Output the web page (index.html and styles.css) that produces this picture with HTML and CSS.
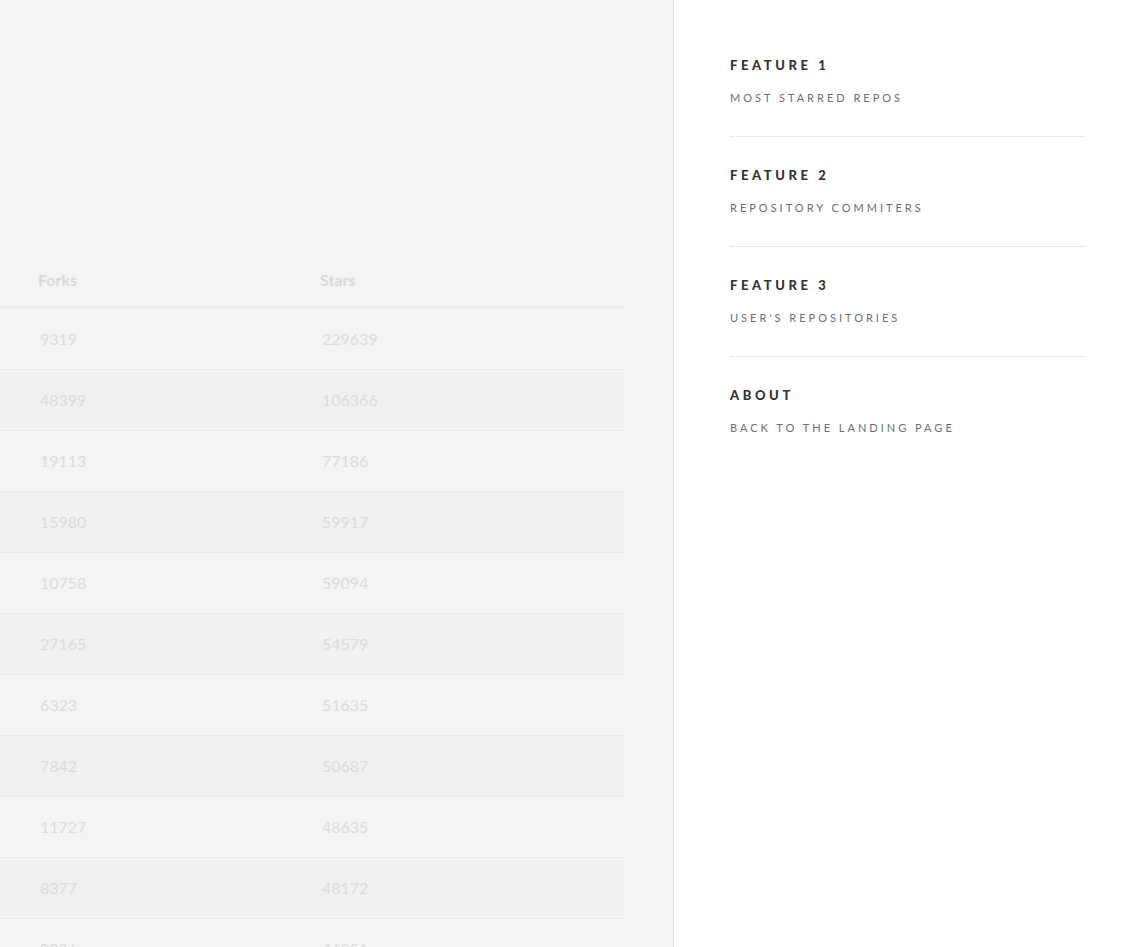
FILE: index.html
```html
<!DOCTYPE html>
<html lang="en">
<head>
<meta charset="utf-8">
<title>Repos</title>
<link rel="stylesheet" href="styles.css">
</head>
<body>
<div class="page">
  <main class="main">
    <div class="top-band"></div>
    <div class="top-space"></div>
    <div class="table">
      <div class="row head"><div class="cell">Forks</div><div class="cell">Stars</div></div>
      <div class="row"><div class="cell">9319</div><div class="cell">229639</div></div>
      <div class="row alt"><div class="cell">48399</div><div class="cell">106366</div></div>
      <div class="row"><div class="cell">19113</div><div class="cell">77186</div></div>
      <div class="row alt"><div class="cell">15980</div><div class="cell">59917</div></div>
      <div class="row"><div class="cell">10758</div><div class="cell">59094</div></div>
      <div class="row alt"><div class="cell">27165</div><div class="cell">54579</div></div>
      <div class="row"><div class="cell">6323</div><div class="cell">51635</div></div>
      <div class="row alt"><div class="cell">7842</div><div class="cell">50687</div></div>
      <div class="row"><div class="cell">11727</div><div class="cell">48635</div></div>
      <div class="row alt"><div class="cell">8377</div><div class="cell">48172</div></div>
      <div class="row"><div class="cell">9886</div><div class="cell">46951</div></div>
    </div>
  </main>
  <nav class="menu">
    <a class="item" href="#">
      <span class="title">Feature 1</span>
      <span class="sub">Most starred repos</span>
    </a>
    <a class="item" href="#">
      <span class="title">Feature 2</span>
      <span class="sub">Repository commiters</span>
    </a>
    <a class="item" href="#">
      <span class="title">Feature 3</span>
      <span class="sub">User's repositories</span>
    </a>
    <a class="item last" href="#">
      <span class="title">About</span>
      <span class="sub">Back to the landing page</span>
    </a>
  </nav>
</div>
</body>
</html>
```

FILE: styles.css
```css
html, body {
  margin: 0;
  padding: 0;
  height: 100%;
  overflow: hidden;
}
body {
  font-family: "Lato", "Liberation Sans", sans-serif;
  background: #fff;
}
.page {
  display: flex;
  height: 947px;
}
.main {
  width: 673px;
  flex: none;
  background: #f4f4f4;
  border-right: 1px solid #dedede;
  display: flex;
  flex-direction: column;
  overflow: hidden;
}
.top-band {
  height: 64px;
  flex: none;
  background: #f5f5f5;
}
.top-space {
  height: 193px;
  flex: none;
}
.table {
  width: 624px;
  display: flex;
  flex-direction: column;
}
.row {
  display: grid;
  grid-template-columns: 282px 1fr;
  height: 60px;
  align-items: center;
  border-bottom: 1px solid #e9e9e9;
  padding-left: 40px;
  font-size: 16px;
  color: #dcdcdc;
}
.row .cell {
  padding-bottom: 1px;
}
.row.alt {
  background: #f1f1f1;
}
.row.head {
  height: 49px;
  padding-left: 38px;
  font-size: 16px;
  font-weight: 700;
  color: #d9d9d9;
  border-bottom: 3px solid #ebebeb;
  align-items: start;
}
.row.head .cell {
  padding-top: 13px;
  padding-bottom: 0;
}
.menu {
  flex: 1;
  padding: 57px 48px 0 56px;
  display: flex;
  flex-direction: column;
}
.item {
  display: flex;
  flex-direction: column;
  text-decoration: none;
  border-bottom: 1px dotted #d6d6d6;
  height: 79px;
  margin-bottom: 30px;
}
.item.last {
  border-bottom: none;
}
.title {
  font-size: 13px;
  font-weight: 900;
  letter-spacing: 3.6px;
  text-transform: uppercase;
  color: #333;
  line-height: 16px;
}
.sub {
  margin-top: 18px;
  font-size: 11px;
  letter-spacing: 3px;
  text-transform: uppercase;
  color: #6e6e6e;
  line-height: 14px;
}
```
